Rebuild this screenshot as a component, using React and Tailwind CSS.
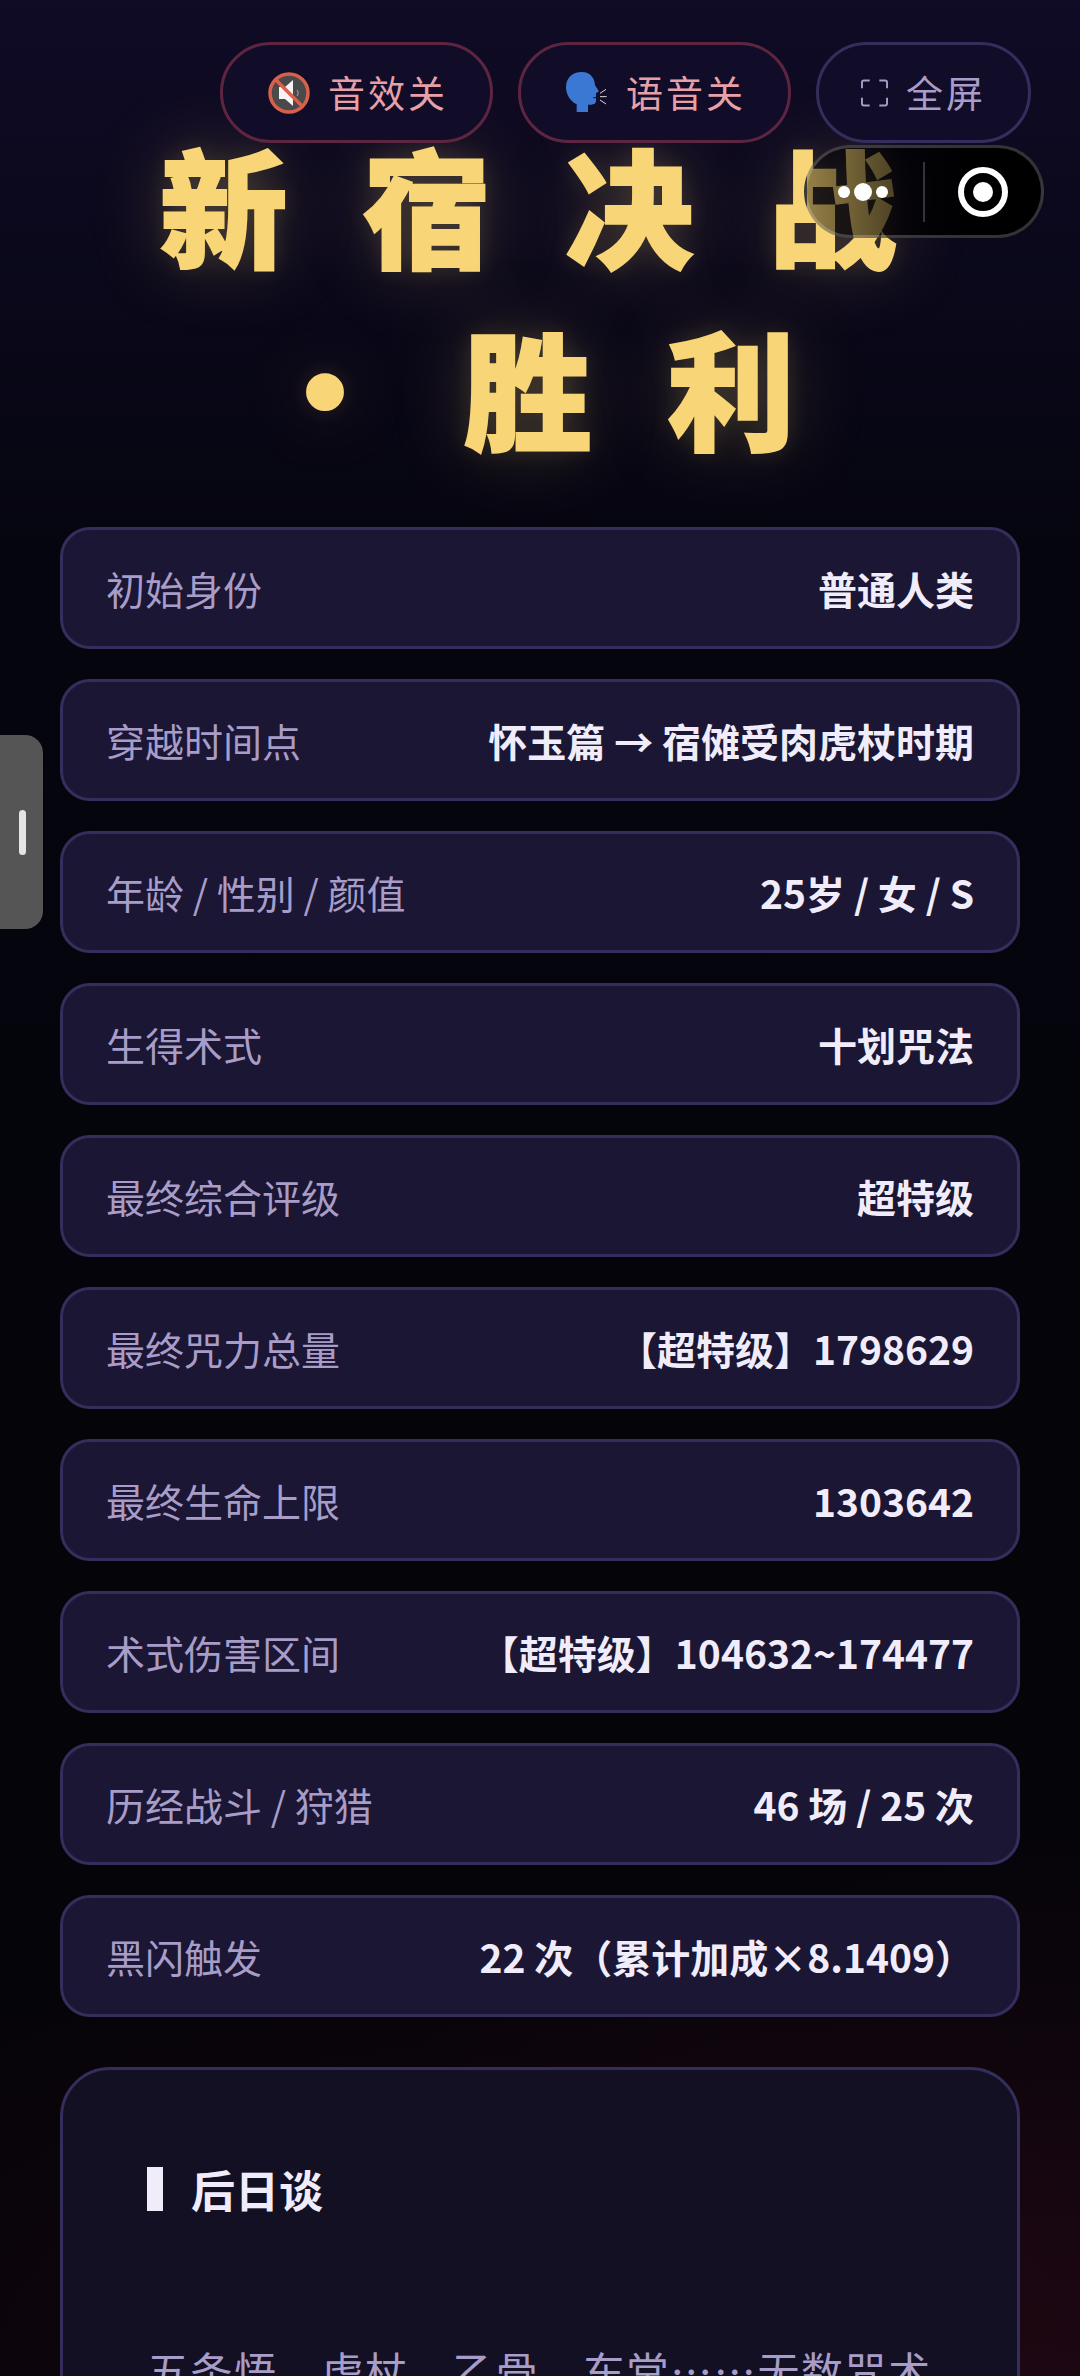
const rows = [
  ["初始身份", "普通人类"],
  ["穿越时间点", "怀玉篇 → 宿傩受肉虎杖时期"],
  ["年龄 / 性别 / 颜值", "25岁 / 女 / S"],
  ["生得术式", "十划咒法"],
  ["最终综合评级", "超特级"],
  ["最终咒力总量", "【超特级】1798629"],
  ["最终生命上限", "1303642"],
  ["术式伤害区间", "【超特级】104632~174477"],
  ["历经战斗 / 狩猎", "46 场 / 25 次"],
  ["黑闪触发", "22 次（累计加成×8.1409）"],
];

const MuteIcon = () => (
  <svg width="45" height="42" viewBox="-3 0 45 42">
    <circle cx="21" cy="21" r="19" fill="#4a4a4a" stroke="#d9604c" strokeWidth="3.5" />
    <path d="M11 15h6l8-7v26l-8-7h-6z" fill="#f4f4f4" />
    <path d="M29 18c1.5 2 1.5 4 0 6" stroke="#9a9a9a" strokeWidth="1.2" fill="none" />
    <path d="M8 8l26 26" stroke="#d9604c" strokeWidth="3.5" />
  </svg>
);

const SpeakIcon = () => (
  <svg width="45" height="41" viewBox="39 48 135 123">
    <path
      d="M95 48C125 48 135 72 135 88L146 104C146 108 141 110 138 110V136C138 142 132 146 124 146H114V168H80V145C60 135 48 115 48 93C48 65 68 48 95 48Z"
      fill="#3a78d4"
    />
    <path d="M130 125h11" stroke="#110c27" strokeWidth="3" />
    <path d="M150 112l18-12M150 122h20M150 132l18 12" stroke="#d8d8e0" strokeWidth="3" />
  </svg>
);

const FullIcon = () => (
  <svg width="27" height="28" viewBox="0 0 28 28" fill="none" stroke="#a89cc8" strokeWidth="2">
    <path d="M1 9V3a2 2 0 0 1 2-2h6M19 1h6a2 2 0 0 1 2 2v6M1 19v6a2 2 0 0 0 2 2h6M27 19v6a2 2 0 0 1-2 2h-6" />
  </svg>
);

const Pill = ({ icon, label, border, color }) => (
  <div className={`h-[101px] px-[42px] flex items-center gap-[18px] rounded-full border-[3px] bg-[#110c27] ${border}`}>
    {icon}
    <span className={`text-[37px] tracking-[3px] leading-none ${color}`}>{label}</span>
  </div>
);

export default function App() {
  return (
    <div
      className="relative h-[2376px] overflow-hidden bg-[radial-gradient(ellipse_800px_600px_at_100%_100%,rgba(90,15,40,0.22),transparent),radial-gradient(ellipse_1000px_500px_at_50%_100%,rgba(70,10,30,0.25),transparent),linear-gradient(180deg,#100b26_0px,#05050f_560px,#040409_1500px)]"
      style={{ fontFamily: '"Noto Sans CJK SC", "Noto Sans", sans-serif' }}
    >
      <div className="flex justify-end gap-[25px] pt-[42px] pr-[49px] relative z-10">
        <Pill icon={<MuteIcon />} label="音效关" border="border-[#5e2540]" color="text-[#e8a0a8]" />
        <Pill icon={<SpeakIcon />} label="语音关" border="border-[#5e2540]" color="text-[#e8a0a8]" />
        <Pill icon={<FullIcon />} label="全屏" border="border-[#352e5c]" color="text-[#a89cc8]" />
      </div>

      <h1 className="text-center text-[128px] font-black leading-[182px] tracking-[75px] text-[#f8d576] pl-[51px] mt-[-30px] [-webkit-text-stroke:2px_#f8d576] [text-shadow:0_0_24px_rgba(248,213,118,0.14),0_0_80px_rgba(248,213,118,0.24)]">
        新宿决战 ·胜利
      </h1>

      <div className="absolute right-[36px] top-[145px] w-[240px] h-[93px] flex items-center rounded-full border-[3px] border-[#ffffff33] bg-[linear-gradient(90deg,rgba(0,0,0,0.4),rgba(0,0,0,0.75)_45%,rgba(0,0,0,0.97)_70%)] z-20">
        <div className="w-[116px] pr-[5px] flex items-center justify-center gap-[4px]">
          <span className="w-[12px] h-[12px] rounded-full bg-white" />
          <span className="w-[18px] h-[18px] rounded-full bg-white" />
          <span className="w-[12px] h-[12px] rounded-full bg-white" />
        </div>
        <div className="w-[2px] h-[60px] bg-[#ffffff33]" />
        <div className="flex-1 flex items-center justify-center">
          <div className="w-[50px] h-[50px] rounded-full border-[6px] border-white flex items-center justify-center">
            <div className="w-[20px] h-[20px] rounded-full bg-white" />
          </div>
        </div>
      </div>

      <div className="absolute left-0 top-[735px] w-[43px] h-[194px] rounded-r-[18px] bg-[#555555] flex items-center justify-end pr-[17px] z-20">
        <div className="w-[7px] h-[45px] rounded-full bg-[#e5e5e5]" />
      </div>

      <div className="mt-[50px] px-[60px] flex flex-col gap-[30px]">
        {rows.map(([k, v]) => (
          <div key={k} className="h-[122px] px-[43px] flex items-center justify-between rounded-[30px] border-[3px] border-[#352e5c] bg-[#1a1633]">
            <span className="text-[39px] text-[#a89cc8]">{k}</span>
            <span className="text-[39px] font-bold text-[#f0ecfa]">{v}</span>
          </div>
        ))}
        <div className="mt-[20px] h-[600px] rounded-[50px] border-[3px] border-[#352e5c] bg-[#131024] px-[84px] pt-[97px]">
          <h2 className="border-l-[16px] border-[#f0ecfa] pl-[28px] text-[44px] leading-[44px] font-bold text-[#f0ecfa]">后日谈</h2>
          <p className="mt-[127px] text-[42px] tracking-[1.6px] text-[#a89cc8]">五条悟、虎杖、乙骨、东堂……无数咒术</p>
        </div>
      </div>
    </div>
  );
}
